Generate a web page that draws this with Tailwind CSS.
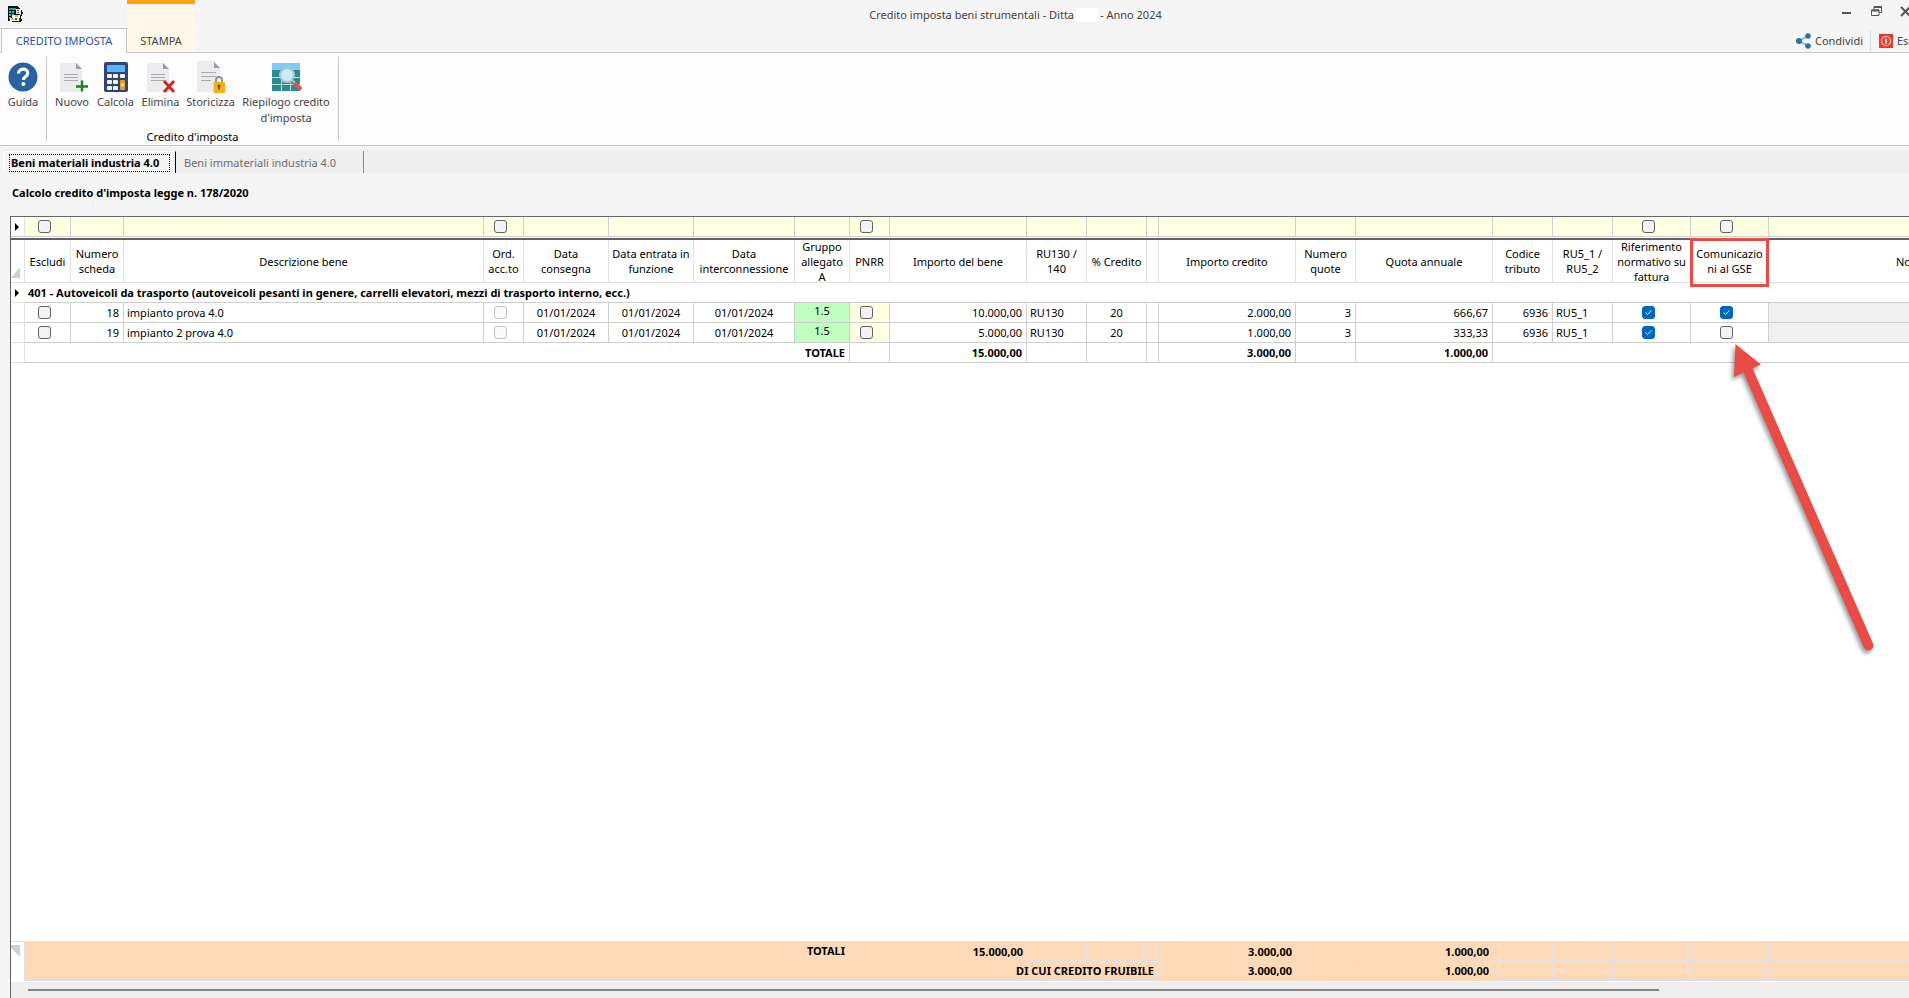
<!DOCTYPE html>
<html lang="it">
<head>
<meta charset="utf-8">
<title>Credito imposta beni strumentali</title>
<script src="https://cdn.jsdelivr.net/npm/@tailwindcss/browser@4"></script>
</head>
<body class="flex h-screen flex-col overflow-hidden bg-[#f5f5f5] font-['Noto_Sans','Open_Sans',sans-serif] text-[11px] leading-4 text-black">

<!-- Title bar and ribbon tabs -->
<header class="flex h-[53px] shrink-0 text-[#444]">
  <div class="flex w-[127px] shrink-0 flex-col">
    <div class="h-7 pt-[6px] pl-2">
      <svg width="16" height="16" viewBox="0 0 16 16" shape-rendering="crispEdges">
        <path d="M0 0h9l3 2v13H0z" fill="#111"/>
        <path d="M1 2h7v2H1z" fill="#18a8b4"/>
        <path d="M1 5h2v2H1zM4 5h2v2H4zM1 8h2v2H1zM4 8h2v2H4zM1 11h2v2H1z" fill="#26c4cf"/>
        <path d="M8 3h4v5H8z" fill="#e8e8e8"/><path d="M9 4h2v1H9zM9 6h2v1H9z" fill="#555"/>
        <path d="M4 9h9v6H2v-3h2z" fill="#fff"/><path d="M3 12h3v2H3zM7 9h3v2H7z" fill="#f5b800"/>
        <path d="M7 12h2v2H7zM11 12h2v3h-2z" fill="#8a2020"/><path d="M13 4h1v2h1v2h-1v2h-1v3h1v2h-2V9h1z" fill="#111"/>
        <path d="M4 15h9v1H3z" fill="#111"/>
      </svg>
    </div>
    <div class="flex flex-1">
      <span class="w-px border-b border-[#c6c6c6]"></span>
      <button class="flex-1 border-x border-t border-[#c6c6c6] bg-[#fcfcfc] text-[#2b579a]">CREDITO IMPOSTA</button>
    </div>
  </div>
  <button class="w-[68px] shrink-0 border-t-4 border-b border-t-[#ffa40d] border-b-[#c6c6c6] bg-[#fff7ea] pt-[26px]">STAMPA</button>
  <div class="flex min-w-0 flex-1 flex-col border-b border-[#c6c6c6]">
    <div class="flex h-7">
      <h1 class="flex flex-1 items-center justify-center pt-[2px]">Credito imposta beni strumentali - Ditta<span class="mx-[2px] inline-block h-[14px] w-[22px] bg-white"></span>- Anno 2024</h1>
      <div class="flex w-[73px] items-start gap-[18px] overflow-hidden pt-[6px] pl-[6px]">
        <button aria-label="Riduci a icona" class="shrink-0"><svg width="11" height="11" viewBox="0 0 11 11"><path d="M0 6h9v2H0z" fill="#555"/></svg></button>
        <button aria-label="Ripristina" class="shrink-0"><svg width="11" height="11" viewBox="0 0 11 11" fill="none" stroke="#555"><path d="M3 3V.5h7.500v6H8"/><path d="M3 1h7.500" stroke-width="2"/><path d="M.5 4h7.500v5.500H.5z"/><path d="M.5 4.500H8" stroke-width="2"/></svg></button>
        <button aria-label="Chiudi" class="shrink-0"><svg width="11" height="11" viewBox="0 0 11 11" stroke="#555" stroke-width="2"><path d="M1 1l9 9M10 1l-9 9"/></svg></button>
      </div>
    </div>
    <div class="flex flex-1 items-center justify-end pt-px">
      <button class="flex items-center gap-1 pr-[7px]">
        <svg width="15" height="16" viewBox="0 0 15 16"><path d="M12 3L3 8l9 5" stroke="#8fb0cc" stroke-width="1.500" fill="none"/><g fill="#2f70a8"><circle cx="3" cy="8" r="3"/><circle cx="12" cy="3" r="2.800"/><circle cx="12" cy="13" r="2.800"/></g></svg>
        Condividi</button>
      <button class="flex h-[22px] w-[39px] items-center gap-1 overflow-hidden border-l border-[#dadada] pl-2">
        <svg class="shrink-0" width="14" height="14" viewBox="0 0 14 14"><path d="M0 0h14v14H0z" fill="#e03c31"/><circle cx="7" cy="7" r="4.500" fill="none" stroke="#ffd9d4" stroke-width="1.200"/><path d="M7 4.500v5" stroke="#fff" stroke-width="1.400"/></svg>
        Esci</button>
    </div>
  </div>
</header>

<!-- Ribbon -->
<section class="flex h-[93px] shrink-0 border-b border-[#c6c6c6] bg-[#fcfcfc] text-[#444]">
  <div class="my-1 flex w-[47px] justify-center border-r border-[#c6c6c6] pt-1">
    <button class="flex flex-col items-center gap-px self-start">
      <svg class="my-px" width="30" height="30" viewBox="0 0 30 30"><circle cx="15" cy="15" r="14.500" fill="#28639f"/><path d="M10.500 11.500c0-2.600 2-4.300 4.600-4.300 2.700 0 4.600 1.600 4.600 4 0 3.400-4.300 3.300-4.300 6.800" fill="none" stroke="#fff" stroke-width="3.200"/><circle cx="15.400" cy="22" r="2" fill="#fff"/></svg>
      Guida</button>
  </div>
  <div class="my-1 flex flex-col border-r border-[#c6c6c6] pt-1 pr-[7px] pl-[7px]">
    <div class="flex flex-1 items-start gap-[6px]">
      <button class="flex w-9 flex-col items-center gap-px">
        <svg width="32" height="32" viewBox="0 0 32 32"><path d="M4 4q0-2 2-2h14l6 6v23H4z" fill="#ececee"/><path d="M20 2l6 6h-6z" fill="#9c9ca4"/><path d="M8 13.500h14M8 16.500h14M8 19.500h14" stroke="#a9a9ad"/><path d="M20 25.500h12M26 19.500v11" stroke="#12861d" stroke-width="2.400"/></svg>
        Nuovo</button>
      <button class="flex w-[39px] flex-col items-center gap-px">
        <svg width="32" height="32" viewBox="0 0 32 32"><rect x="4" y="1" width="24" height="30" rx="2" fill="#2f4672"/><path d="M7 4h18v7H7z" fill="#56b4fb"/><g fill="#f4f4f8"><rect x="7" y="13" width="5" height="4" rx="1"/><rect x="13" y="13" width="5" height="4" rx="1"/><rect x="20" y="13" width="5" height="4" rx="1"/><rect x="7" y="19" width="5" height="4" rx="1"/><rect x="13" y="19" width="5" height="4" rx="1"/><rect x="7" y="25" width="5" height="4" rx="1"/><rect x="13" y="25" width="5" height="4" rx="1"/></g><rect x="20" y="19" width="5" height="10" rx="1" fill="#f39a14"/><path d="M21 24h3M22.500 22.500v3" stroke="#fff"/></svg>
        Calcola</button>
      <button class="flex w-[39px] flex-col items-center gap-px">
        <svg width="34" height="32" viewBox="0 0 34 32"><path d="M3 4q0-2 2-2h14l6 6v23H3z" fill="#ececee"/><path d="M19 2l6 6h-6z" fill="#9c9ca4"/><path d="M7 13.500h14M7 16.500h14M7 19.500h14" stroke="#a9a9ad"/><path d="M20 20l10 11M30 20L20 31" stroke="#d3221c" stroke-width="2.800"/></svg>
        Elimina</button>
      <button class="flex w-[49px] flex-col items-center gap-px">
        <svg width="32" height="32" viewBox="0 0 32 32"><path d="M2 2q0-2 2-2h15l6 6v25H2z" fill="#ececee"/><path d="M19 1l6 6h-6z" fill="#9c9ca4"/><path d="M6 11.500h15M6 15.500h15M6 19.500h10" stroke="#a9a9ad"/><path d="M21 22v-3q0-3 3-3t3 3v3" stroke="#8b95a0" stroke-width="2" fill="none"/><rect x="18.500" y="21" width="11.500" height="11" rx="1" fill="#f5b013"/><circle cx="24" cy="25" r="1.500" fill="#55503c"/><path d="M24 25v4" stroke="#55503c" stroke-width="1.200"/></svg>
        Storicizza</button>
      <button class="flex w-[90px] flex-col items-center gap-px">
        <svg width="32" height="32" viewBox="0 0 32 32"><path d="M2 2h28v28H2z" fill="#2d8a8f"/><path d="M2 2h28v7H2z" fill="#7fcbf7"/><path d="M2 16.500h28M2 23.500h28M11.500 16v14M20.500 9v21" stroke="#b9e3e3" stroke-width="1"/><circle cx="17" cy="14" r="7" fill="#c5edfa" stroke="#b7c0c6" stroke-width="2"/><path d="M22 19l3 3" stroke="#b7c0c6" stroke-width="2"/><path d="M24.500 22l6.500 6.500" stroke="#e0524c" stroke-width="4"/></svg>
        Riepilogo credito d'imposta</button>
    </div>
    <div class="-mb-1 text-center text-black">Credito d'imposta</div>
  </div>
</section>

<!-- Page tabs -->
<nav class="mt-[3px] ml-[3px] flex h-6 shrink-0 bg-[#efefef] pt-[2px]">
  <button class="flex w-[173px] items-center border-t border-r border-l border-t-white border-r-black border-l-white bg-[#f5f5f5] pl-[5px] font-bold">
    <span class="flex h-[18px] w-[161px] items-center border border-dotted border-black pl-px whitespace-nowrap">Beni materiali industria 4.0</span>
  </button>
  <button class="w-[188px] border-r border-[#8a8a8a] pt-px pl-2 text-left text-[#6d6d6d]">Beni immateriali industria 4.0</button>
</nav>

<h2 class="mt-3 mb-[15px] ml-3 shrink-0 leading-4 font-bold">Calcolo credito d'imposta legge n. 178/2020</h2>

<!-- Grid -->
<main class="ml-[10px] flex min-h-0 flex-1 flex-col overflow-hidden border-t border-l border-[#666] bg-white">
  <div class="min-h-0 flex-1">
    <table class="w-full min-w-[2038px] table-fixed border-separate border-spacing-0 leading-[19px] [&_th]:p-0 [&_th]:font-normal [&_td]:p-0 [&_input]:block [&_input]:size-[13px] [&_input]:appearance-none [&_input]:rounded-[3px] [&_input]:border [&_input]:border-[#626262] [&_input]:bg-[#f3f3f3] [&_input:disabled]:border-[#c4c4c4] [&_input:disabled]:bg-[#f9f9f9] [&_input:checked]:border-[#0067c0] [&_input:checked]:bg-[#0067c0]">
      <colgroup>
        <col class="w-[14px]"><col class="w-[46px]"><col class="w-[53px]"><col class="w-[360px]"><col class="w-[40px]"><col class="w-[85px]"><col class="w-[85px]"><col class="w-[101px]"><col class="w-[55px]"><col class="w-[40px]"><col class="w-[137px]"><col class="w-[60px]"><col class="w-[60px]"><col class="w-[12px]"><col class="w-[137px]"><col class="w-[60px]"><col class="w-[137px]"><col class="w-[60px]"><col class="w-[60px]"><col class="w-[78px]"><col class="w-[78px]"><col>
      </colgroup>
      <thead>
        <tr class="h-5 [&>td]:border-r [&>td]:border-b [&>td]:border-[#cfcfcf] [&>td]:bg-[#ffffe1]">
          <td class="border-r-[#e2e2e2]! bg-white! pl-1!"><svg width="4" height="8" viewBox="0 0 4 8"><path d="M0 0l4 4-4 4z"/></svg></td>
          <td><div class="flex justify-center pr-[6px]"><input type="checkbox" aria-label="Filtro Escludi"></div></td><td></td><td></td>
          <td><div class="flex justify-center pr-[6px]"><input type="checkbox" aria-label="Filtro Ord. acc.to"></div></td><td></td><td></td><td></td><td></td>
          <td><div class="flex justify-center pr-[6px]"><input type="checkbox" aria-label="Filtro PNRR"></div></td><td></td><td></td><td></td><td></td><td></td><td></td><td></td><td></td><td></td>
          <td><div class="flex justify-center pr-[6px]"><input type="checkbox" aria-label="Filtro Riferimento normativo"></div></td>
          <td><div class="flex justify-center pr-[6px]"><input type="checkbox" aria-label="Filtro Comunicazioni al GSE"></div></td><td></td>
        </tr>
        <tr><td colspan="22" class="h-[3px] border-b-2 border-[#626262]"></td></tr>
        <tr class="leading-[15px] [&>*]:border-r [&>*]:border-b [&>*]:border-[#e2e2e2] [&_div]:flex [&_div]:h-[42px] [&_div]:items-center [&_div]:justify-center">
          <td class="align-bottom"><svg class="mb-1" width="9" height="11" viewBox="0 0 9 11"><path d="M9 0v11H0z" fill="#d0d0d0"/></svg></td>
          <th><div>Escludi</div></th><th><div>Numero<br>scheda</div></th><th><div>Descrizione bene</div></th><th><div>Ord.<br>acc.to</div></th><th><div>Data<br>consegna</div></th><th><div>Data entrata in<br>funzione</div></th><th><div>Data<br>interconnessione</div></th><th><div>Gruppo<br>allegato<br>A</div></th><th><div>PNRR</div></th><th><div>Importo del bene</div></th><th><div>RU130 /<br>140</div></th><th><div>% Credito</div></th><th></th><th><div>Importo credito</div></th><th><div>Numero<br>quote</div></th><th><div>Quota annuale</div></th><th><div>Codice<br>tributo</div></th><th><div>RU5_1 /<br>RU5_2</div></th><th><div class="whitespace-nowrap">Riferimento<br>normativo su<br>fattura</div></th>
          <th class="relative"><div>Comunicazio<br>ni al GSE</div><span class="absolute -top-[2px] -right-px -bottom-[5px] -left-px border-[3px] border-[#e84c44]"></span></th>
          <th><div>Note</div></th>
        </tr>
      </thead>
      <tbody>
        <tr class="h-5 [&>td]:border-b [&>td]:border-[#cfcfcf]">
          <td class="border-b-[#e2e2e2]! pl-1!"><svg width="4" height="8" viewBox="0 0 4 8"><path d="M0 0l4 4-4 4z"/></svg></td>
          <td colspan="21" class="pl-[3px]! font-bold">401 - Autoveicoli da trasporto (autoveicoli pesanti in genere, carrelli elevatori, mezzi di trasporto interno, ecc.)</td>
        </tr>
        <tr class="h-5 [&>td]:border-r [&>td]:border-b [&>td]:border-[#cfcfcf]">
          <td class="border-[#e2e2e2]!"></td>
          <td><div class="flex justify-center pr-[6px]"><input type="checkbox" aria-label="Escludi scheda 18"></div></td>
          <td class="pr-1! text-right">18</td><td class="pl-[3px]!">impianto prova 4.0</td>
          <td><div class="flex justify-center pr-[6px]"><input type="checkbox" disabled aria-label="Ord. acc.to scheda 18"></div></td>
          <td class="text-center">01/01/2024</td><td class="text-center">01/01/2024</td><td class="text-center">01/01/2024</td>
          <td class="bg-[#c0ffc0] text-center align-top leading-4">1.5</td>
          <td class="bg-[#ffffe1]"><div class="flex justify-center pr-[6px]"><input type="checkbox" aria-label="PNRR scheda 18"></div></td>
          <td class="pr-1! text-right">10.000,00</td><td class="pl-[3px]!">RU130</td><td class="text-center">20</td><td></td>
          <td class="pr-1! text-right">2.000,00</td><td class="pr-1! text-right">3</td><td class="pr-1! text-right">666,67</td><td class="pr-1! text-right">6936</td><td class="pl-[3px]!">RU5_1</td>
          <td><div class="flex justify-center pr-[6px]"><span class="relative"><input type="checkbox" checked aria-label="Riferimento normativo scheda 18"><svg class="pointer-events-none absolute inset-0" width="13" height="13" fill="none" stroke="#fff"><path d="M3.500 6.500l2 2 4-4"/></svg></span></div></td>
          <td><div class="flex justify-center pr-[6px]"><span class="relative"><input type="checkbox" checked aria-label="Comunicazioni al GSE scheda 18"><svg class="pointer-events-none absolute inset-0" width="13" height="13" fill="none" stroke="#fff"><path d="M3.500 6.500l2 2 4-4"/></svg></span></div></td>
          <td class="bg-[#f0f0f0]"></td>
        </tr>
        <tr class="h-5 [&>td]:border-r [&>td]:border-b [&>td]:border-[#cfcfcf]">
          <td class="border-[#e2e2e2]!"></td>
          <td><div class="flex justify-center pr-[6px]"><input type="checkbox" aria-label="Escludi scheda 19"></div></td>
          <td class="pr-1! text-right">19</td><td class="pl-[3px]!">impianto 2 prova 4.0</td>
          <td><div class="flex justify-center pr-[6px]"><input type="checkbox" disabled aria-label="Ord. acc.to scheda 19"></div></td>
          <td class="text-center">01/01/2024</td><td class="text-center">01/01/2024</td><td class="text-center">01/01/2024</td>
          <td class="bg-[#c0ffc0] text-center align-top leading-4">1.5</td>
          <td class="bg-[#ffffe1]"><div class="flex justify-center pr-[6px]"><input type="checkbox" aria-label="PNRR scheda 19"></div></td>
          <td class="pr-1! text-right">5.000,00</td><td class="pl-[3px]!">RU130</td><td class="text-center">20</td><td></td>
          <td class="pr-1! text-right">1.000,00</td><td class="pr-1! text-right">3</td><td class="pr-1! text-right">333,33</td><td class="pr-1! text-right">6936</td><td class="pl-[3px]!">RU5_1</td>
          <td><div class="flex justify-center pr-[6px]"><span class="relative"><input type="checkbox" checked aria-label="Riferimento normativo scheda 19"><svg class="pointer-events-none absolute inset-0" width="13" height="13" fill="none" stroke="#fff"><path d="M3.500 6.500l2 2 4-4"/></svg></span></div></td>
          <td><div class="flex justify-center pr-[6px]"><input type="checkbox" aria-label="Comunicazioni al GSE scheda 19"></div></td>
          <td class="bg-[#f0f0f0]"></td>
        </tr>
        <tr class="h-5 font-bold [&>td]:border-r [&>td]:border-b [&>td]:border-[#cfcfcf] [&>td]:pr-1 [&>td]:text-right">
          <td class="border-[#e2e2e2]!"></td><td colspan="8">TOTALE</td><td></td><td>15.000,00</td><td></td><td></td><td></td><td>3.000,00</td><td></td><td>1.000,00</td><td colspan="5"></td>
        </tr>
      </tbody>
    </table>
  </div>

  <!-- Grand totals -->
  <table class="w-full min-w-[2038px] shrink-0 table-fixed border-separate border-spacing-0 border-t border-[#e2e2e2] font-bold [&_td]:p-0">
    <colgroup>
      <col class="w-[14px]"><col class="w-[46px]"><col class="w-[53px]"><col class="w-[360px]"><col class="w-[40px]"><col class="w-[85px]"><col class="w-[85px]"><col class="w-[101px]"><col class="w-[55px]"><col class="w-[40px]"><col class="w-[137px]"><col class="w-[60px]"><col class="w-[60px]"><col class="w-[12px]"><col class="w-[137px]"><col class="w-[60px]"><col class="w-[137px]"><col class="w-[60px]"><col class="w-[60px]"><col class="w-[78px]"><col class="w-[78px]"><col>
    </colgroup>
    <tbody class="[&_td]:border-dotted [&_td]:border-[#dce0e4] [&_td]:bg-[#ffdab9] [&_td]:pr-1 [&_td]:text-right">
      <tr class="h-[19px] leading-[18px] [&>td]:border-r [&>td]:border-b">
        <td rowspan="2" class="border-b-0! border-solid! bg-white! pt-[3px]! align-top"><svg width="9" height="12" viewBox="0 0 9 12"><path d="M0 0h9v12L0 3z" fill="#d0d0d0"/></svg></td>
        <td colspan="8">TOTALI</td><td></td><td class="border-0!">15.000,00</td><td></td><td></td><td></td><td class="border-0!">3.000,00</td><td></td><td class="border-0!">1.000,00</td><td></td><td></td><td></td><td></td><td></td>
      </tr>
      <tr class="h-5 [&>td]:border-r [&>td]:border-b">
        <td colspan="13">DI CUI CREDITO FRUIBILE</td><td class="border-0!">3.000,00</td><td></td><td class="border-0!">1.000,00</td><td></td><td></td><td></td><td></td><td></td>
      </tr>
    </tbody>
  </table>

  <!-- Horizontal scroll bar -->
  <div class="mt-px flex h-4 shrink-0 bg-[#efefef] pt-[7px] pr-[250px] pl-[17px]">
    <div class="h-[2px] flex-1 bg-[#858585]"></div>
  </div>
</main>

<!-- Callout arrow over the grid -->
<svg class="pointer-events-none absolute top-[340px] right-[29px] drop-shadow-[-2px_3px_2px_rgba(0,0,0,0.4)]" width="150" height="320" viewBox="1730 340 150 320">
  <path d="M1747 368L1868.500 645.500" stroke="#e84c44" stroke-width="10" stroke-linecap="round"/>
  <path d="M1735.500 344L1761 364.500L1734 377z" fill="#e84c44"/>
</svg>
</body>
</html>
